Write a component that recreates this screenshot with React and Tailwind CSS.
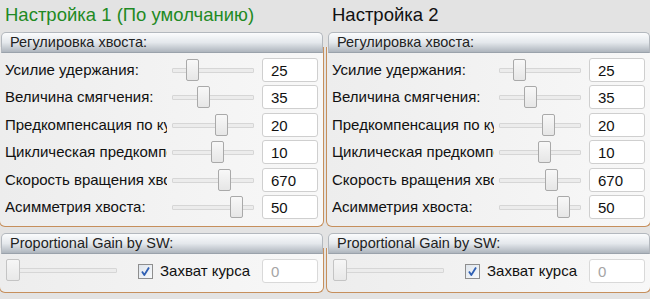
const rows = [
  { label: 'Усилие удержания:', value: '25', thumb: 19 },
  { label: 'Величина смягчения:', value: '35', thumb: 30 },
  { label: 'Предкомпенсация по курсу:', value: '20', thumb: 48 },
  { label: 'Циклическая предкомпенсация:', value: '10', thumb: 44 },
  { label: 'Скорость вращения хвоста:', value: '670', thumb: 51 },
  { label: 'Асимметрия хвоста:', value: '50', thumb: 63 },
];

function PanelHeader({ children }) {
  return (
    <div className="relative z-10 ml-[2px] mr-[1px] h-[21px] rounded-t-[5px] border border-[#b3b8be] border-b-[#9aa2ab] bg-gradient-to-b from-[#fbfcfd] via-[#e4e8ec] to-[#aeb5bd] pl-[8px] text-[14.5px] leading-[19px] text-[#222]">
      {children}
    </div>
  );
}

function Slider({ left }) {
  return (
    <div className="relative h-[24px] w-[93px] shrink-0">
      <div className="absolute left-[5px] top-[10px] h-[5px] w-[82px] rounded-[1px] border border-[#d6d6d6] bg-[#ececec]" />
      <div
        className="absolute top-[1px] h-[22px] w-[13px] rounded-[2px] border border-[#a9a9a9] bg-gradient-to-b from-[#f8f8f8] to-[#e6e6e6]"
        style={{ left }}
      />
    </div>
  );
}

function ValueBox({ value, disabled }) {
  return (
    <div
      className={`ml-[2px] h-[24px] w-[56px] shrink-0 rounded-[3px] border pl-[8px] text-[15px] leading-[24px] ${
        disabled ? 'border-[#d9d9d9] bg-white text-[#a5a5a5]' : 'border-[#cfcfcf] bg-white text-[#111]'
      }`}
    >
      {value}
    </div>
  );
}

function Column({ title, green }) {
  return (
    <div className="flex w-[325px] shrink-0 flex-col">
      <div className={`h-[32px] pl-[6px] pt-[2px] text-[18.5px] leading-[25px] ${green ? 'text-[#1f8a24]' : 'text-[#111]'}`}>
        {title}
      </div>

      <PanelHeader>Регулировка хвоста:</PanelHeader>
      <div className="-mt-[6px] rounded-b-[6px] border-x border-b border-[#c68f5c] bg-gradient-to-r from-[#ededed] to-[#f8f8f8] pb-[5px] pt-[9px]">
        {rows.map((r) => (
          <div key={r.label} className="flex h-[27.5px] items-center pl-[5px] pr-[5px]">
            <div className="w-[162px] shrink-0 overflow-hidden whitespace-nowrap text-[15px] leading-[20px] text-[#111]">
              {r.label}
            </div>
            <Slider left={r.thumb} />
            <ValueBox value={r.value} />
          </div>
        ))}
      </div>

      <div className="mt-[6px]">
        <PanelHeader>Proportional Gain by SW:</PanelHeader>
      </div>
      <div className="-mt-[6px] rounded-b-[6px] border-x border-b border-[#c68f5c] bg-gradient-to-r from-[#ededed] to-[#f8f8f8] pb-[7px] pt-[9px]">
        <div className="flex h-[28px] items-center pl-[5px] pr-[5px]">
          <div className="relative h-[24px] w-[115px] shrink-0">
            <div className="absolute left-[2px] top-[9px] h-[5px] w-[110px] rounded-[1px] border border-[#d6d6d6] bg-[#ececec]" />
            <div className="absolute left-[1px] top-0 h-[22px] w-[14px] rounded-[2px] border border-[#c4c4c4] bg-gradient-to-b from-[#f6f6f6] to-[#e8e8e8]" />
          </div>
          <div className="ml-[18px] flex h-[15px] w-[15px] shrink-0 items-center justify-center border border-[#8e8e8e] bg-gradient-to-br from-[#dfe5ec] to-[#f7f9fb]">
            <svg width="11" height="11" viewBox="0 0 11 11">
              <path d="M2 5.5 L4.3 9 L9 1.5" fill="none" stroke="#2f5fb3" strokeWidth="1.8" strokeLinejoin="round" />
            </svg>
          </div>
          <div className="ml-[7px] whitespace-nowrap text-[15px] leading-[20px] text-[#111]">Захват курса</div>
          <div className="ml-auto">
            <ValueBox value="0" disabled />
          </div>
        </div>
      </div>
    </div>
  );
}

export default function App() {
  return (
    <div className="h-[299px] w-[650px] overflow-hidden bg-[#e3e3e3] font-['Liberation_Sans',Arial,sans-serif]">
      <div className="-ml-[1px] flex w-[652px] gap-[2px]">
        <Column title="Настройка 1 (По умолчанию)" green />
        <Column title="Настройка 2" />
      </div>
    </div>
  );
}
